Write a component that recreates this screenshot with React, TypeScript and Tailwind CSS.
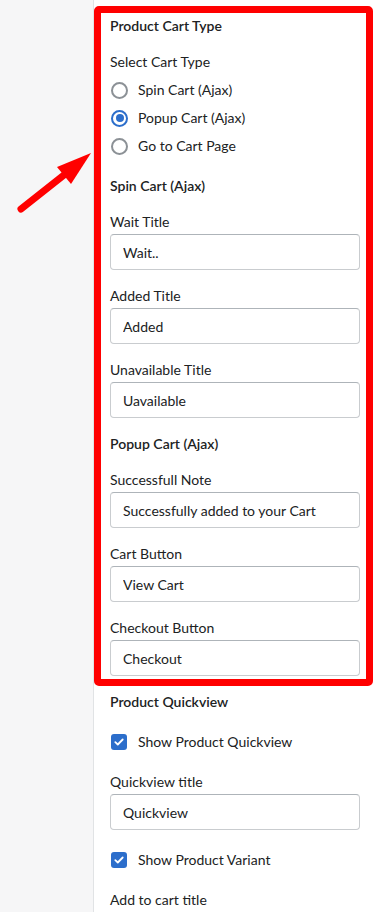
import React from "react";

const font = { fontFamily: '"Segoe UI", Lato, "Liberation Sans", sans-serif' };

function Field({ label, value }: { label: string; value: string }) {
  return (
    <div className="flex flex-col">
      <label className="text-sm leading-5 text-[#202223] mb-[2px]">{label}</label>
      <input
        readOnly
        defaultValue={value}
        className="h-9 w-full rounded-[4px] border border-[#c9cccf] border-t-[#aeb4b9] bg-white px-3 text-sm text-[#202223] outline-none"
        style={font}
      />
    </div>
  );
}

function Radio({ label, checked }: { label: string; checked?: boolean }) {
  return (
    <div className="flex h-7 items-center gap-[10px] pl-px">
      {checked ? (
        <span className="flex h-[17px] w-[17px] items-center justify-center rounded-full border-2 border-[#2c6ecb]">
          <span className="h-[8px] w-[8px] rounded-full bg-[#2c6ecb]" />
        </span>
      ) : (
        <span className="h-[17px] w-[17px] rounded-full border-2 border-[#8c9196]" />
      )}
      <span className="text-sm text-[#202223]">{label}</span>
    </div>
  );
}

function Check({ label }: { label: string }) {
  return (
    <div className="flex h-7 items-center gap-[11px] pl-px">
      <span className="flex h-4 w-4 items-center justify-center rounded-[3px] bg-[#2c6ecb]">
        <svg width="10" height="8" viewBox="0 0 10 8" fill="none">
          <path d="M1.3 4.2 L3.8 6.5 L8.7 1.5" stroke="white" strokeWidth="1.8" strokeLinecap="round" strokeLinejoin="round" />
        </svg>
      </span>
      <span className="text-sm text-[#202223]">{label}</span>
    </div>
  );
}

function Heading({ children }: { children: React.ReactNode }) {
  return <h3 className="text-sm leading-5 font-semibold text-[#202223]">{children}</h3>;
}

export default function App() {
  return (
    <div className="relative flex h-[912px] w-[376px] overflow-hidden bg-white" style={font}>
      <aside className="w-[94px] shrink-0 border-r border-[#e1e3e5] bg-[#f6f6f7]" />

      <main className="flex flex-1 flex-col gap-4 px-4 pt-4 *:shrink-0">
        <Heading>Product Cart Type</Heading>

        <div className="flex flex-col">
          <span className="mb-1 text-sm leading-5 text-[#202223]">Select Cart Type</span>
          <Radio label="Spin Cart (Ajax)" />
          <Radio label="Popup Cart (Ajax)" checked />
          <Radio label="Go to Cart Page" />
        </div>

        <Heading>Spin Cart (Ajax)</Heading>
        <Field label="Wait Title" value="Wait.." />
        <Field label="Added Title" value="Added" />
        <Field label="Unavailable Title" value="Uavailable" />

        <Heading>Popup Cart (Ajax)</Heading>
        <Field label="Successfull Note" value="Successfully added to your Cart" />
        <Field label="Cart Button" value="View Cart" />
        <Field label="Checkout Button" value="Checkout" />

        <Heading>Product Quickview</Heading>
        <Check label="Show Product Quickview" />
        <Field label="Quickview title" value="Quickview" />
        <Check label="Show Product Variant" />
        <Field label="Add to cart title" value="Add to cart" />
      </main>

      {/* annotation overlay */}
      <div className="pointer-events-none absolute left-[94px] top-[6px] h-[680px] w-[279px] rounded-[5px] border-[7px] border-[#ff0000]" />
      <svg className="pointer-events-none absolute left-0 top-0" width="100" height="220" viewBox="0 0 100 220">
        <line x1="21" y1="209" x2="64" y2="175" stroke="#ff0000" strokeWidth="7" strokeLinecap="round" />
        <polygon points="91,153 57,167 71,184" fill="#ff0000" />
      </svg>
    </div>
  );
}
